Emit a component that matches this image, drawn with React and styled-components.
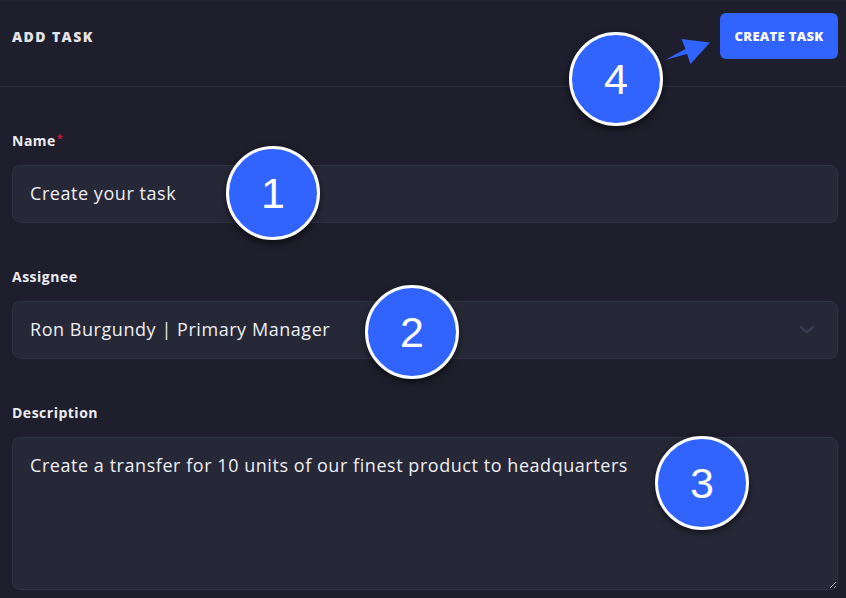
import React from "react";
import styled, { createGlobalStyle } from "styled-components";

const GlobalStyle = createGlobalStyle`
  html, body {
    margin: 0;
    padding: 0;
    background: #1e1e2c;
  }
  * {
    box-sizing: border-box;
  }
`;

const Page = styled.div`
  position: relative;
  width: 846px;
  height: 598px;
  overflow: hidden;
  background: #1e1e2c;
  border-top: 1px solid #262636;
  font-family: "Open Sans", "Liberation Sans", sans-serif;
  color: #e9e9ef;
`;

const Header = styled.div`
  height: 86px;
  padding: 12px 8px 0 12px;
  display: flex;
  align-items: flex-start;
  justify-content: space-between;
  border-bottom: 1px solid #2e2f42;
`;

const Title = styled.h1`
  margin: 0;
  height: 46px;
  display: flex;
  align-items: center;
  font-size: 14px;
  font-weight: 800;
  letter-spacing: 1.4px;
  color: #e4e4ea;
`;

const Button = styled.button`
  width: 118px;
  height: 46px;
  border: none;
  border-radius: 6px;
  background: #3163ff;
  color: #fff;
  font-family: inherit;
  font-size: 13px;
  font-weight: 800;
  letter-spacing: 0.3px;
  cursor: pointer;
`;

const Form = styled.form`
  padding: 44px 8px 0 12px;
  display: flex;
  flex-direction: column;
  gap: 44px;
`;

const Field = styled.div`
  display: flex;
  flex-direction: column;
  gap: 14px;
`;

const Label = styled.label`
  height: 20px;
  line-height: 20px;
  font-size: 14px;
  font-weight: 700;
  letter-spacing: 0.5px;
  color: #ececf1;
`;

const Required = styled.span`
  color: #c5173a;
  font-size: 11px;
  vertical-align: top;
  margin-left: 1px;
  line-height: 14px;
`;

const Box = styled.div`
  position: relative;
  height: ${(p) => p.$height || 58}px;
  background: #262837;
  border: 1px solid #2f3145;
  border-radius: 8px;
  display: flex;
  align-items: center;
  padding: 0 17px 3px;
  font-size: 18px;
  font-weight: 500;
  letter-spacing: 0.55px;
  color: #eeeef3;
`;

const Chevron = styled.svg`
  margin-left: auto;
  margin-right: 6px;
  margin-top: 3px;
  width: 14px;
  height: 8px;
`;

const TextArea = styled.textarea`
  display: block;
  width: 100%;
  height: 153px;
  background: #262837;
  border: 1px solid #2f3145;
  border-radius: 8px;
  padding: 15px 17px;
  font-family: inherit;
  font-size: 18px;
  font-weight: 500;
  letter-spacing: 0.55px;
  line-height: 24px;
  color: #eeeef3;
  color-scheme: dark;
  outline: none;
  resize: vertical;
`;

const Marker = styled.div`
  position: absolute;
  left: ${(p) => p.$x - 47}px;
  top: ${(p) => p.$y - 47}px;
  width: 94px;
  height: 94px;
  border-radius: 50%;
  background: #3163ff;
  border: 3px solid #ffffff;
  box-shadow: 0 3px 7px rgba(0, 0, 0, 0.55);
  display: flex;
  align-items: center;
  justify-content: center;
  font-family: "Liberation Sans", Arial, sans-serif;
  font-size: 43px;
  color: #fff;
`;

const Arrow = styled.svg`
  position: absolute;
  left: 0;
  top: 0;
  pointer-events: none;
`;

const markers = [
  { n: 1, x: 273, y: 192 },
  { n: 2, x: 412, y: 331 },
  { n: 3, x: 702, y: 482 },
  { n: 4, x: 616, y: 78 },
];

export default function App() {
  return (
    <Page>
      <GlobalStyle />
      <Header>
        <Title>ADD TASK</Title>
        <Button type="button">CREATE TASK</Button>
      </Header>
      <Form>
        <Field>
          <Label>
            Name<Required>*</Required>
          </Label>
          <Box>Create your task</Box>
        </Field>
        <Field>
          <Label>Assignee</Label>
          <Box $height={58}>
            Ron Burgundy | Primary Manager
            <Chevron viewBox="0 0 14 8" fill="none">
              <path d="M1 1l6 5.5L13 1" stroke="#3d3f57" strokeWidth="1.8" strokeLinecap="round" />
            </Chevron>
          </Box>
        </Field>
        <Field>
          <Label>Description</Label>
          <TextArea defaultValue="Create a transfer for 10 units of our finest product to headquarters" />
        </Field>
      </Form>
      {markers.map((m) => (
        <Marker key={m.n} $x={m.x} $y={m.y}>
          {m.n}
        </Marker>
      ))}
      <Arrow width="846" height="120" viewBox="0 0 846 120">
        <path d="M665 59 L685.5 48 L681.5 38 L710 41.5 L690.5 63 L687 53 Z" fill="#3163ff" />
      </Arrow>
    </Page>
  );
}
